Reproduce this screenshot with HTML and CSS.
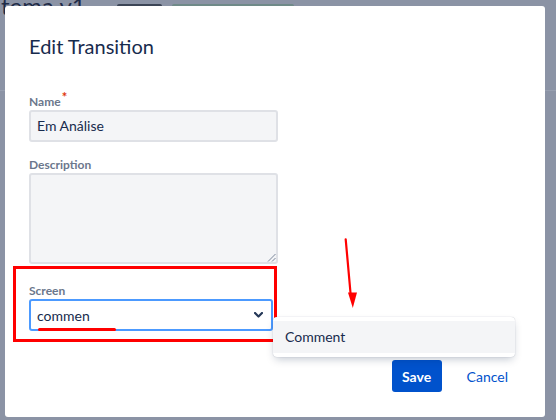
FILE: index.html
```html
<!DOCTYPE html>
<html lang="en">
<head>
<meta charset="utf-8">
<title>Edit Transition</title>
<link rel="stylesheet" href="styles.css">
</head>
<body>
<div class="backdrop">
  <div class="page-head">
    <span class="page-title">tema v1</span>
    <span class="page-btn page-btn-dark"></span>
    <span class="page-btn page-btn-green"></span>
  </div>
  <div class="page-rule"></div>
</div>

<div class="modal" role="dialog">
  <h1 class="modal-title">Edit Transition</h1>

  <div class="field">
    <label class="label">Name<span class="req">*</span></label>
    <div class="input">Em Análise</div>
  </div>

  <div class="field field-desc">
    <label class="label">Description</label>
    <div class="textarea">
      <svg class="resize" width="9" height="9" viewBox="0 0 9 9"><path d="M1 8.5L8.5 1M5 8.5L8.5 5" stroke="#7a869a" stroke-width="1" fill="none"/></svg>
    </div>
  </div>

  <div class="highlight">
    <label class="label">Screen</label>
    <div class="select">
      <span class="select-value">commen</span>
      <svg class="chevron" width="9" height="6" viewBox="0 0 9 6"><path d="M1 1L4.5 4.5L8 1" stroke="#253858" stroke-width="2.2" fill="none" stroke-linecap="round" stroke-linejoin="round"/></svg>
      <span class="mark"></span>
    </div>
  </div>

  <div class="footer">
    <button class="btn-save">Save</button>
    <button class="btn-cancel">Cancel</button>
  </div>

  <div class="menu">
    <div class="option">Comment</div>
  </div>

  <svg class="arrow" width="24" height="76" viewBox="0 0 24 76">
    <path d="M5.7 3.3L10.6 58" stroke="#ff0000" stroke-width="2.2" fill="none" stroke-linecap="round"/>
    <path d="M8 56.5L17 56.5L12.8 72Z" fill="#ff0000"/>
  </svg>
</div>
</body>
</html>
```

FILE: styles.css
```css
* { box-sizing: border-box; }

html, body {
  margin: 0;
  padding: 0;
}

body {
  width: 556px;
  height: 420px;
  overflow: hidden;
  position: relative;
  background: #8b93a5;
  font-family: Lato, "Noto Sans", sans-serif;
  color: #172b4d;
}

.backdrop {
  height: 420px;
}

.page-head {
  display: flex;
  align-items: flex-start;
  height: 96px;
  margin-top: -6px;
}

.page-title {
  font-size: 24px;
  line-height: 24px;
  color: #1f2b47;
  padding-left: 1px;
}

.page-btn {
  display: block;
  height: 12px;
  margin-top: 10px;
  border-radius: 2px;
}

.page-btn-dark {
  width: 45px;
  margin-left: 31px;
  background: #3c4556;
}

.page-btn-green {
  width: 122px;
  margin-left: 10px;
  background: #6f8a88;
}

.page-rule {
  height: 1px;
  background: #979fb0;
}

.modal {
  position: absolute;
  left: 5px;
  top: 6px;
  width: 540px;
  height: 411px;
  background: #fff;
  border-radius: 3px;
  padding: 28px 24px 0 24px;
}

.modal-title {
  margin: 0;
  font-size: 20px;
  line-height: 24px;
  font-weight: 400;
  color: #172b4d;
}

.field {
  margin-top: 35px;
  width: 249px;
}

.field-desc {
  margin-top: 15px;
}

.label {
  display: block;
  font-size: 12px;
  line-height: 16px;
  font-weight: 700;
  color: #6b778c;
}

.req {
  color: #de350b;
  font-size: 13px;
  position: relative;
  top: -4px;
  margin-left: 1px;
}

.input {
  height: 32px;
  background: #f4f5f7;
  border: 2px solid #dfe1e6;
  border-radius: 3px;
  padding: 0 6px;
  font-size: 14px;
  line-height: 28px;
  color: #172b4d;
}

.textarea {
  position: relative;
  height: 91px;
  background: #f4f5f7;
  border: 2px solid #dfe1e6;
  border-radius: 3px;
}

.resize {
  position: absolute;
  right: 0;
  bottom: 0;
}

.highlight {
  margin-top: 2px;
  margin-left: -16px;
  width: 264px;
  border: 3px solid #ff0000;
  padding: 14px 1px 8px 13px;
}

.select {
  position: relative;
  display: flex;
  align-items: center;
  justify-content: space-between;
  height: 32px;
  background: #fff;
  border: 2px solid #4c9aff;
  border-radius: 3px;
  padding: 0 8px 0 6px;
  font-size: 14px;
  color: #172b4d;
}

.chevron {
  display: block;
}

.mark {
  position: absolute;
  left: 7px;
  top: 27px;
  width: 78px;
  height: 2.5px;
  border-radius: 2px;
  background: #ff0000;
}

.footer {
  display: flex;
  justify-content: flex-end;
  align-items: center;
  gap: 9px;
  margin-top: 18px;
}

.btn-save {
  height: 32px;
  width: 50px;
  padding: 0;
  border: 0;
  border-radius: 3px;
  background: #0052cc;
  color: #fff;
  font-family: inherit;
  font-size: 14px;
  font-weight: 700;
}

.btn-cancel {
  height: 32px;
  padding: 0 13px 0 16px;
  border: 0;
  background: transparent;
  color: #0052cc;
  font-family: inherit;
  font-size: 14px;
  font-weight: 400;
}

.menu {
  position: absolute;
  left: 268px;
  top: 311px;
  width: 242px;
  padding: 4px 0;
  background: #fff;
  border-radius: 4px;
  box-shadow: 0 4px 8px -2px rgba(9, 30, 66, 0.25), 0 0 1px rgba(9, 30, 66, 0.31);
}

.option {
  height: 32px;
  line-height: 32px;
  padding-left: 12px;
  background: #f4f5f7;
  font-size: 14px;
  color: #172b4d;
}

.arrow {
  position: absolute;
  left: 335px;
  top: 230px;
}
```
